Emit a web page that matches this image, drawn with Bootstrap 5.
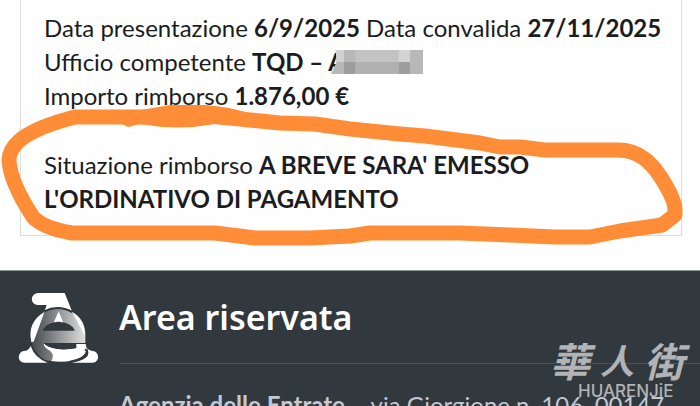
<!DOCTYPE html>
<html lang="it">
<head>
<meta charset="utf-8">
<meta name="viewport" content="width=device-width, initial-scale=1">
<title>Area riservata</title>
<link href="https://cdn.jsdelivr.net/npm/bootstrap@5.3.0/dist/css/bootstrap.min.css" rel="stylesheet">
<style>
  body { font-family: "Lato", "Liberation Sans", sans-serif; color: #1b1c1d; background: #fefefe; }
  .refund { margin: 0 18px 0 20px; border: 1px solid #dcdcdc; border-top: 0; padding: 11px 8px 19px 23px; font-size: 24px; line-height: 34px; }
  .refund p + p { margin-top: 35px; }
  .redacted { width: 92px; height: 24px; top: 3px; left: 3px; }
  .ring { left: 0; top: 100px; width: 100%; height: 150px; }
  .site-footer { margin-top: 34px; background: #31383e; border-top: 1px solid #8e9698; padding: 21px 0 0 18px; }
  .brand-mark { width: 82px; height: 72px; }
  .brand-row { gap: 19px; }
  .brand-title { font: 600 34px/50px "Noto Sans", sans-serif; color: #fff; }
  .footer-body { border-top: 1px solid #495157; margin-top: 21px; }
  .address { color: #c3c8d2; font-size: 24px; line-height: 34px; padding-top: 24px; }
  .stamp { right: 16px; bottom: 6px; width: 134px; color: #b1b3b4; }
  .stamp-cjk { font: italic 700 40px/44px "Noto Sans CJK TC", sans-serif; }
  .stamp-cjk .small-glyph { font-size: 34px; }
  .stamp-latin { font: 500 17px/18px "Inter", sans-serif; padding-left: 28px; }
</style>
</head>
<body>
<div class="vh-100 overflow-hidden position-relative">
  <main class="refund">
    <p class="mb-0">Data presentazione <b>6/9/2025</b> Data convalida <b>27/11/2025</b><br>
      Ufficio competente <b>TQD – <span class="position-relative">A<svg class="redacted position-absolute" viewBox="0 0 98 24" preserveAspectRatio="none" aria-hidden="true">
        <path d="M5 0H98V24H0L6 12Z" fill="#b8b8b8"/><path d="M5 0H14V12H6Z" fill="#d1d1d1"/><path d="M14 12h12v12H14zM72 12h12v12H72z" fill="#9d9d9d"/><path d="M26 0h46v12H26z" fill="#c3c3c3"/><path d="M72 0h12v12H72z" fill="#d4d4d4"/><path d="M26 12h46v12H26z" fill="#b1b1b1"/>
      </svg></span></b><br>
      Importo rimborso <b>1.876,00 €</b></p>
    <p class="mb-0">Situazione rimborso <b>A BREVE SARA' EMESSO<br>L'ORDINATIVO DI PAGAMENTO</b></p>
  </main>

  <svg class="ring position-absolute" viewBox="0 100 700 150" preserveAspectRatio="none" aria-hidden="true">
    <path d="M75 117H145L200 115L240 119L280 123L315 124L350 129L400 134L425 136L480 143L500 147H520L545 150H618C640 150 652 164 660 176Q675 199 675 210V215L662 225L620 231L590 237H555L510 235L460 233H370L350 236L310 238H255L215 233H72Q43 228 33 217Q10 182 9 160Q9 150 20 140Q36 127 75 117Z" fill="none" stroke="#ff8d38" stroke-width="15" stroke-linejoin="round"/>
    <path d="M135 111L170 105H205Q230 107 245 112L235 125L215 124Q178 131 140 124L128 127L120 123Z" fill="#ff8d38"/>
  </svg>

  <footer class="site-footer">
    <div class="brand-row d-flex align-items-start">
      <svg class="brand-mark flex-shrink-0" viewBox="56 66 246 216" role="img" aria-label="Agenzia delle Entrate">
        <defs><linearGradient id="tone" x1="0" x2="1"><stop offset="0" stop-color="#41464a"/><stop offset=".5" stop-color="#8f9193"/><stop offset="1" stop-color="#e0e0e0"/></linearGradient></defs>
        <path d="M114 69H196L219 126Q175 101 135 126L142 105H114C93 103 91 74 114 69Z" fill="#fff"/>
        <path d="M94 228Q88 243 73 243C53 247 53 278 76 278H145Q106 264 94 228Z" fill="#fff"/>
        <path d="M216 278H280C302 277 301 244 280 243Q267 241 261 230Q275 253 258 264Q241 275 216 278Z" fill="#fff"/>
        <path d="M176 116C125 116 94 150 94 194C94 240 127 270 148 272C168 274 168 244 150 241Q133 237 132 219H258V192C258 147 224 116 176 116Z" fill="url(#tone)"/>
        <path d="M96 216Q83 157 135 127L103 215ZM219 127Q256 150 257 198Z" fill="#fff"/>
        <path d="M135 124Q176 103 219 126" fill="none" stroke="#31383e" stroke-width="6"/>
        <path d="M178 124L192 158Q177 151 163 158Z" fill="#fff"/>
        <path d="M130 182C142 147 215 148 226 182Z" fill="#31383e"/>
        <path d="M132 220Q158 245 229 235V222H259Q268 246 247 260Q210 281 155 273Q167 258 153 243Q135 236 132 220Z" fill="#fff"/>
        <path d="M134 220H231V234Q166 247 134 220Z" fill="#31383e"/>
        <path d="M257 238Q271 249 254 262Q236 272 213 275" fill="none" stroke="#31383e" stroke-width="5"/>
      </svg>
      <div class="flex-grow-1">
        <h2 class="brand-title mb-0">Area riservata</h2>
        <div class="footer-body"><p class="address mb-0 text-nowrap"><b>Agenzia delle Entrate</b> – via Giorgione n. 106, 00147</p></div>
      </div>
    </div>
  </footer>

  <div class="stamp position-absolute" lang="zh-Hant">
    <div class="stamp-cjk d-flex justify-content-between"><span>華</span><span class="small-glyph">人</span><span>街</span></div>
    <div class="stamp-latin">HUARENJiE</div>
  </div>
</div>
<script src="https://cdn.jsdelivr.net/npm/bootstrap@5.3.0/dist/js/bootstrap.bundle.min.js"></script>
</body>
</html>
